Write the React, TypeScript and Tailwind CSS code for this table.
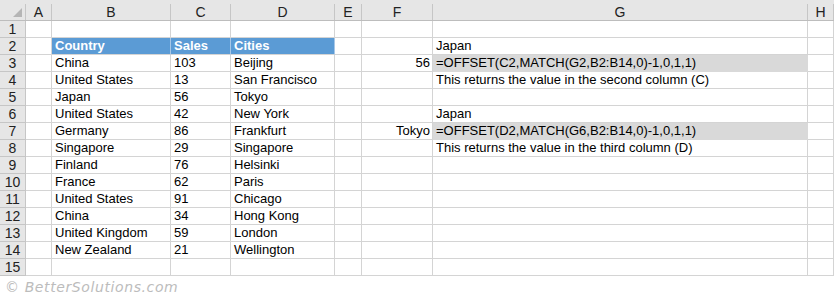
import React from "react";

type Cell = { v?: string; align?: "l" | "r"; kind?: "head" | "fill" };

const COLS = ["A", "B", "C", "D", "E", "F", "G", "H"];

const rows: Cell[][] = [
  [{}, {}, {}, {}, {}, {}, {}, {}],
  [{}, { v: "Country", kind: "head" }, { v: "Sales", kind: "head" }, { v: "Cities", kind: "head" }, {}, {}, { v: "Japan" }, {}],
  [{}, { v: "China" }, { v: "103" }, { v: "Beijing" }, {}, { v: "56", align: "r" }, { v: "=OFFSET(C2,MATCH(G2,B2:B14,0)-1,0,1,1)", kind: "fill" }, {}],
  [{}, { v: "United States" }, { v: "13" }, { v: "San Francisco" }, {}, {}, { v: "This returns the value in the second column (C)" }, {}],
  [{}, { v: "Japan" }, { v: "56" }, { v: "Tokyo" }, {}, {}, {}, {}],
  [{}, { v: "United States" }, { v: "42" }, { v: "New York" }, {}, {}, { v: "Japan" }, {}],
  [{}, { v: "Germany" }, { v: "86" }, { v: "Frankfurt" }, {}, { v: "Tokyo", align: "r" }, { v: "=OFFSET(D2,MATCH(G6,B2:B14,0)-1,0,1,1)", kind: "fill" }, {}],
  [{}, { v: "Singapore" }, { v: "29" }, { v: "Singapore" }, {}, {}, { v: "This returns the value in the third column (D)" }, {}],
  [{}, { v: "Finland" }, { v: "76" }, { v: "Helsinki" }, {}, {}, {}, {}],
  [{}, { v: "France" }, { v: "62" }, { v: "Paris" }, {}, {}, {}, {}],
  [{}, { v: "United States" }, { v: "91" }, { v: "Chicago" }, {}, {}, {}, {}],
  [{}, { v: "China" }, { v: "34" }, { v: "Hong Kong" }, {}, {}, {}, {}],
  [{}, { v: "United Kingdom" }, { v: "59" }, { v: "London" }, {}, {}, {}, {}],
  [{}, { v: "New Zealand" }, { v: "21" }, { v: "Wellington" }, {}, {}, {}, {}],
  [{}, {}, {}, {}, {}, {}, {}, {}],
];

function DataCell({ c }: { c: Cell }) {
  if (c.kind === "head") {
    return (
      <div className="h-[17px] bg-[#5b9bd5] border-r border-b border-r-[#a7c7e7] border-b-[#d4d4d4] px-[3px] flex items-end text-white font-bold leading-[16px] whitespace-nowrap overflow-hidden">
        {c.v}
      </div>
    );
  }
  if (c.kind === "fill") {
    return (
      <div className="h-[17px] bg-[#d9d9d9] border-r border-b border-[#d9d9d9] px-[3px] flex items-end leading-[16px] whitespace-nowrap overflow-hidden">
        {c.v}
      </div>
    );
  }
  return (
    <div
      className={
        "h-[17px] bg-white border-r border-b border-[#d4d4d4] flex items-end leading-[16px] whitespace-nowrap overflow-visible " +
        (c.align === "r" ? "justify-end pr-[2px]" : "pl-[3px]")
      }
    >
      {c.v}
    </div>
  );
}

export default function App() {
  return (
    <div className="w-[834px] h-[297px] bg-white overflow-hidden text-[13px] text-black font-['Liberation_Sans',Arial,sans-serif]">
      <div className="grid grid-cols-[26px_26px_119px_60px_104px_27px_71px_375px_26px]">
        {/* corner */}
        <div className="h-[21px] bg-[#e6e6e6] border-b border-[#bdbdbd] pt-[4px]">
          <div className="h-full border-r border-[#c6c6c6] relative">
            <svg className="absolute left-0 top-[-4px]" width="25" height="20" viewBox="0 0 25 20">
              <polygon points="13,17 22,17 22,8" fill="#b5b5b5" />
            </svg>
          </div>
        </div>
        {COLS.map((l) => (
          <div key={l} className="h-[21px] bg-[#e6e6e6] border-b border-[#bdbdbd] pt-[4px]">
            <div className="h-full border-r border-[#c6c6c6] flex items-center justify-center text-[14px] text-[#222] leading-none">
              {l}
            </div>
          </div>
        ))}
        {rows.map((r, i) => (
          <React.Fragment key={i}>
            <div className="h-[17px] bg-[#e6e6e6] border-r border-b border-[#c6c6c6] flex items-end justify-center text-[14px] text-[#222] leading-[16px]">
              {i + 1}
            </div>
            {r.map((c, j) => (
              <DataCell key={j} c={c} />
            ))}
          </React.Fragment>
        ))}
      </div>
      <div className="pl-[5px] pt-[1px] text-[14px] italic tracking-[0.6px] text-[#bcbcbc] font-['DejaVu_Sans',sans-serif] leading-[20px]">
        © BetterSolutions.com
      </div>
    </div>
  );
}
